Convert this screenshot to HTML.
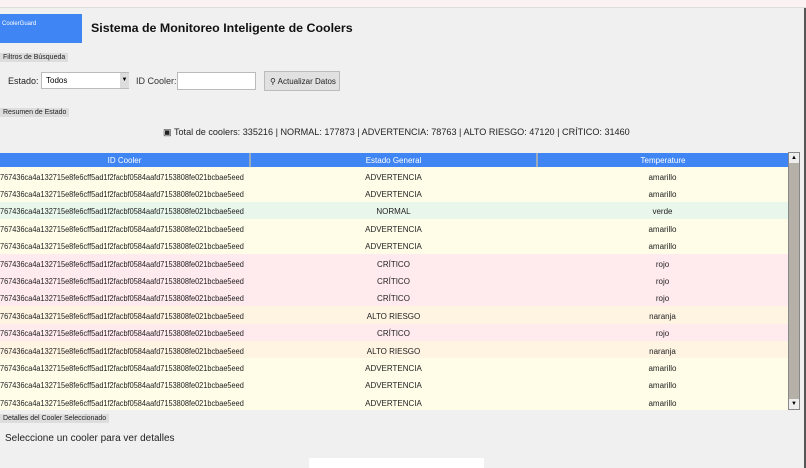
<!DOCTYPE html><html><head><style>
body{margin:0;width:806px;height:468px;overflow:hidden;background:#f0f0f0;font-family:"Liberation Sans",sans-serif;position:relative}
.a{position:absolute}
.tb{left:0;top:0;width:806px;height:7px;background:#fbf2f4;border-bottom:1px solid #ddd}
.lbl{font-size:7px;background:#ddd;padding:1px 3px;color:#222}
table{position:absolute;left:0;top:153px;width:788px;border-collapse:collapse;font-size:8px;color:#222;table-layout:fixed}
th{background:#3f85f4;color:#fff;font-weight:normal;height:14px;border-right:2px solid #9ab;padding:0}
td{height:17.4px;padding:3px 0 0;box-sizing:border-box;text-align:center;white-space:nowrap;overflow:hidden}
td:first-child{text-align:left}
.y{background:#fffde8}.g{background:#e9f6ec}.r{background:#ffeaee}.o{background:#fff4e2}
.n{display:inline-block;transform:scaleX(.92);transform-origin:left}
</style></head><body>
<div class="a tb"></div>
<div class="a" style="left:804px;top:8px;width:2px;height:460px;background:#555"></div>
<div class="a" style="left:0;top:14px;width:82px;height:29px;background:#3f85f4;color:#fff;font-size:6px;padding:7px 0 0 2px;box-sizing:border-box">CoolerGuard</div>
<div class="a" style="left:91px;top:21px;font-size:12.4px;font-weight:bold;color:#111">Sistema de Monitoreo Inteligente de Coolers</div>
<div class="a lbl" style="left:0;top:53px">Filtros de Búsqueda</div>
<div class="a" style="left:8px;top:76px;font-size:9px;color:#222">Estado:</div>
<div class="a" style="left:41px;top:72px;width:88px;height:17px;background:#fff;border:1px solid #bbb;box-sizing:border-box;font-size:8px;padding:3px 4px">Todos</div>
<div class="a" style="left:120px;top:73px;width:9px;height:15px;background:#ddd;font-size:6px;text-align:center;line-height:15px">▼</div>
<div class="a" style="left:136px;top:76px;font-size:9px;color:#333">ID Cooler:</div>
<div class="a" style="left:177px;top:72px;width:79px;height:18px;background:#fff;border:1px solid #bbb;box-sizing:border-box"></div>
<div class="a" style="left:264px;top:71px;width:76px;height:20px;background:#e1e1e1;border:1px solid #bbb;box-sizing:border-box;font-size:8px;padding:5px 0 0 5px;color:#222;white-space:nowrap">⚲ Actualizar Datos</div>
<div class="a lbl" style="left:0;top:108px">Resumen de Estado</div>
<div class="a" style="left:163px;top:127px;font-size:9.1px;color:#222;white-space:nowrap">▣ Total de coolers: 335216 | NORMAL: 177873 | ADVERTENCIA: 78763 | ALTO RIESGO: 47120 | CRÍTICO: 31460</div>
<table>
<colgroup><col style="width:250px"><col style="width:287px"><col></colgroup>
<tr><th>ID Cooler</th><th>Estado General</th><th style="border:none">Temperature</th></tr>
<tr class="y"><td><span class="n">767436ca4a132715e8fe6cff5ad1f2facbf0584aafd7153808fe021bcbae5eed</span></td><td>ADVERTENCIA</td><td>amarillo</td></tr>
<tr class="y"><td><span class="n">767436ca4a132715e8fe6cff5ad1f2facbf0584aafd7153808fe021bcbae5eed</span></td><td>ADVERTENCIA</td><td>amarillo</td></tr>
<tr class="g"><td><span class="n">767436ca4a132715e8fe6cff5ad1f2facbf0584aafd7153808fe021bcbae5eed</span></td><td>NORMAL</td><td>verde</td></tr>
<tr class="y"><td><span class="n">767436ca4a132715e8fe6cff5ad1f2facbf0584aafd7153808fe021bcbae5eed</span></td><td>ADVERTENCIA</td><td>amarillo</td></tr>
<tr class="y"><td><span class="n">767436ca4a132715e8fe6cff5ad1f2facbf0584aafd7153808fe021bcbae5eed</span></td><td>ADVERTENCIA</td><td>amarillo</td></tr>
<tr class="r"><td><span class="n">767436ca4a132715e8fe6cff5ad1f2facbf0584aafd7153808fe021bcbae5eed</span></td><td>CRÍTICO</td><td>rojo</td></tr>
<tr class="r"><td><span class="n">767436ca4a132715e8fe6cff5ad1f2facbf0584aafd7153808fe021bcbae5eed</span></td><td>CRÍTICO</td><td>rojo</td></tr>
<tr class="r"><td><span class="n">767436ca4a132715e8fe6cff5ad1f2facbf0584aafd7153808fe021bcbae5eed</span></td><td>CRÍTICO</td><td>rojo</td></tr>
<tr class="o"><td><span class="n">767436ca4a132715e8fe6cff5ad1f2facbf0584aafd7153808fe021bcbae5eed</span></td><td>ALTO RIESGO</td><td>naranja</td></tr>
<tr class="r"><td><span class="n">767436ca4a132715e8fe6cff5ad1f2facbf0584aafd7153808fe021bcbae5eed</span></td><td>CRÍTICO</td><td>rojo</td></tr>
<tr class="o"><td><span class="n">767436ca4a132715e8fe6cff5ad1f2facbf0584aafd7153808fe021bcbae5eed</span></td><td>ALTO RIESGO</td><td>naranja</td></tr>
<tr class="y"><td><span class="n">767436ca4a132715e8fe6cff5ad1f2facbf0584aafd7153808fe021bcbae5eed</span></td><td>ADVERTENCIA</td><td>amarillo</td></tr>
<tr class="y"><td><span class="n">767436ca4a132715e8fe6cff5ad1f2facbf0584aafd7153808fe021bcbae5eed</span></td><td>ADVERTENCIA</td><td>amarillo</td></tr>
<tr class="y"><td><span class="n">767436ca4a132715e8fe6cff5ad1f2facbf0584aafd7153808fe021bcbae5eed</span></td><td>ADVERTENCIA</td><td>amarillo</td></tr>
</table>
<div class="a" style="left:788px;top:152px;width:12px;height:258px;background:#b5b0a8;border:1px solid #888;box-sizing:border-box"></div>
<div class="a" style="left:789px;top:153px;width:10px;height:10px;background:#eee;font-size:6px;text-align:center;line-height:10px">▲</div>
<div class="a" style="left:789px;top:399px;width:10px;height:10px;background:#eee;font-size:6px;text-align:center;line-height:10px">▼</div>
<div class="a lbl" style="left:0;top:414px">Detalles del Cooler Seleccionado</div>
<div class="a" style="left:5px;top:433px;font-size:10px;color:#222">Seleccione un cooler para ver detalles</div>
<div class="a" style="left:309px;top:458px;width:175px;height:10px;background:#fff"></div>
</body></html>
